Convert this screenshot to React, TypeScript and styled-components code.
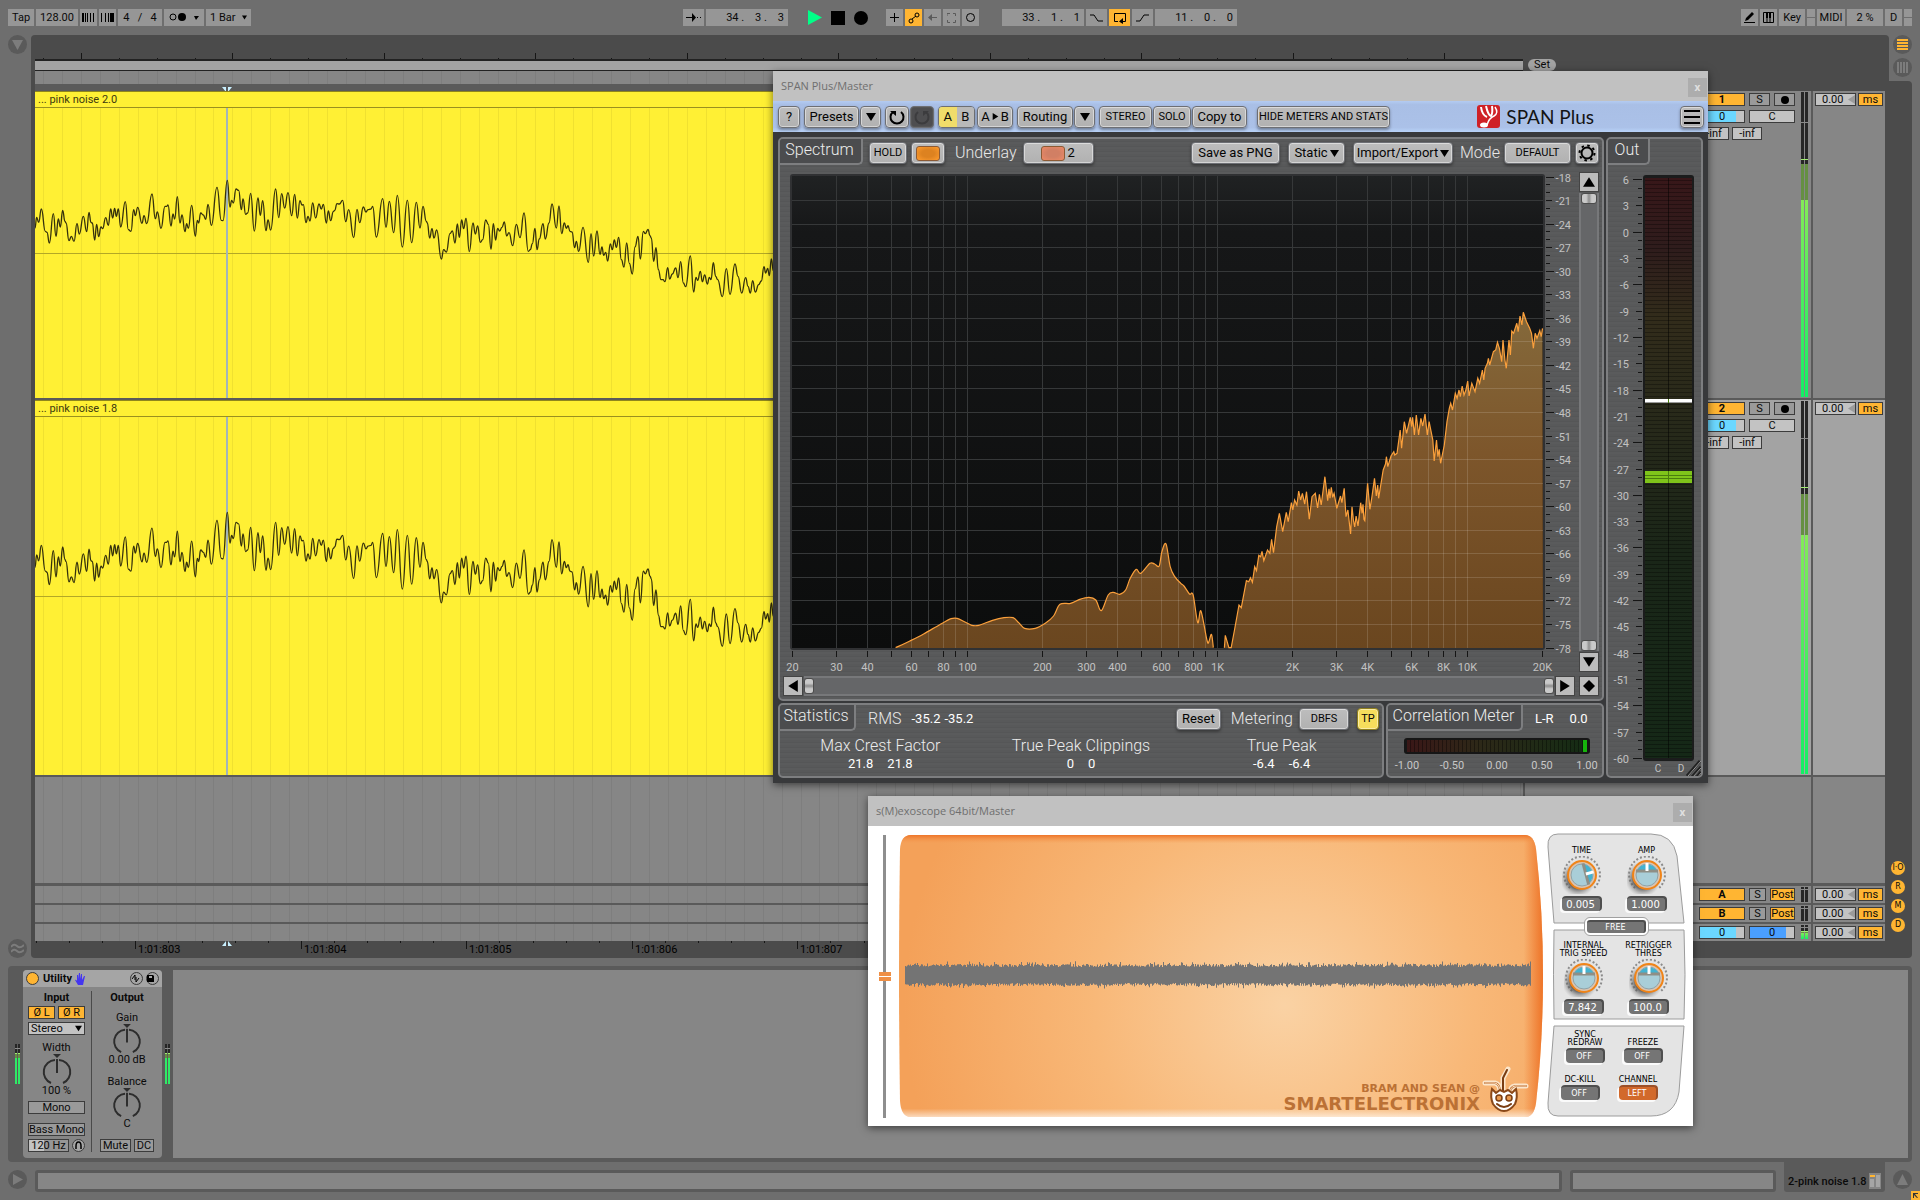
import React from "react";
import styled, { createGlobalStyle, css } from "styled-components";

/* ------------------------------------------------------------------ */
/* Palette and shared values                                           */
/* ------------------------------------------------------------------ */

const c = {
  bg: "#6e6e6e",
  dark: "#4b4b4b",
  edge: "#5a5a5a",
  panel: "#868686",
  light: "#a4a4a4",
  control: "#969696",
  field: "#c3c3c3",
  orange: "#ffb532",
  blue: "#6bd7ff",
  azure: "#4a9fff",
  yellow: "#fff034",
};

const uiFont = `Roboto, "Noto Sans", sans-serif`;
const spanFont = `Roboto, "Liberation Sans", sans-serif`;
const pixelFont = `"DejaVu Sans", sans-serif`;

const Global = createGlobalStyle`
  *, *::before, *::after { box-sizing: border-box; }
  html, body { margin: 0; background: ${c.bg}; }
  body { font: 11px/13px ${uiFont}; color: #0a0a0a; overflow: hidden; }
  button, input, select { font: inherit; color: inherit; margin: 0; padding: 0; border: 0; border-radius: 0; }
  button { cursor: pointer; }
  svg { display: block; }
`;

/* ------------------------------------------------------------------ */
/* Page frame                                                          */
/* ------------------------------------------------------------------ */

const Page = styled.main`
  position: relative;
  min-height: 100vh;
  display: flex;
  flex-direction: column;
  background: ${c.bg};
`;

const TopBar = styled.header`
  display: grid;
  grid-template-columns: 1fr auto 1fr;
  align-items: center;
  height: 35px;
  padding: 0 8px;
`;

const Group = styled.div<{ $end?: boolean }>`
  display: flex;
  align-items: center;
  gap: 2px;
  justify-content: ${(p) => (p.$end ? "flex-end" : "flex-start")};
`;

const Spacer = styled.span<{ $w: number }>`
  width: ${(p) => p.$w}px;
`;

const barControl = css<{ $w: number; $on?: boolean }>`
  width: ${(p) => p.$w}px;
  height: 17px;
  background: ${(p) => (p.$on ? c.orange : c.control)};
  text-align: center;
`;

const BarButton = styled.button<{ $w: number; $on?: boolean }>`
  ${barControl}
  display: flex;
  align-items: center;
  justify-content: center;
`;

const BarInput = styled.input<{ $w: number; $right?: boolean }>`
  ${barControl}
  text-align: ${(p) => (p.$right ? "right" : "center")};
  padding-right: ${(p) => (p.$right ? 4 : 0)}px;
  white-space: pre;
`;

const BarSelectBox = styled.label<{ $w: number }>`
  ${barControl}
  display: flex;
  align-items: center;
  justify-content: space-between;
  padding: 0 4px;
  select { appearance: none; background: none; }
`;

const Transport = styled.button`
  width: 21px;
  height: 17px;
  background: none;
  display: flex;
  align-items: center;
  justify-content: center;
`;

const Stub = styled.button`
  width: 8px;
  height: 17px;
  border-bottom: 8px solid ${c.control};
  border-top: 8px solid ${c.control};
  background: ${c.bg};
`;

const Workspace = styled.section`
  flex: 1;
  display: flex;
`;

const Rail = styled.div`
  width: 31px;
  padding-left: 8px;
  display: flex;
  flex-direction: column;
  justify-content: space-between;
`;

const Round = styled.button`
  width: 19px;
  height: 19px;
  border-radius: 50%;
  background: ${c.edge};
  display: flex;
  align-items: center;
  justify-content: center;
`;

const Arranger = styled.div`
  flex: 1;
  min-width: 0;
  display: flex;
  flex-direction: column;
  background: ${c.dark};
  border-radius: 4px 4px 0 4px;
  padding: 0 4px;
`;

const SideColumn = styled.div`
  width: 31px;
  display: flex;
  flex-direction: column;
`;

const SideTop = styled.div`
  display: flex;
  flex-direction: column;
  gap: 4px;
  height: 46px;
  padding-left: 4px;
`;

const SideFill = styled.div`
  flex: 1;
  margin-right: 8px;
  background: ${c.dark};
  border-radius: 0 4px 4px 0;
  display: flex;
  flex-direction: column;
  justify-content: flex-end;
  gap: 5px;
  padding: 0 0 26px 2px;
`;

const Toggle = styled.button`
  width: 14px;
  height: 14px;
  border-radius: 50%;
  background: ${c.orange};
  font: 8px/14px ${pixelFont};
  text-align: center;
`;

/* ------------------------------------------------------------------ */
/* Arrangement                                                         */
/* ------------------------------------------------------------------ */

const SIDE = 362;

const Ruler = styled.div`
  height: 24px;
  overflow: hidden;
`;

const OverviewRow = styled.div`
  display: flex;
  height: 12px;
  gap: 5px;
`;

const Overview = styled.div`
  flex: 1;
  background: #a3a3a3;
  border-top: 2px solid #222;
  border-bottom: 1px solid #222;
`;

const OverviewSide = styled.div`
  width: ${SIDE - 5}px;
`;

const SetButton = styled.button`
  display: block;
  width: 28px;
  height: 12px;
  border-radius: 6px;
  background: #a3a3a3;
  line-height: 12px;
`;

const Strip = styled.div`
  position: relative;
  height: 13px;
  margin-right: ${SIDE}px;
  background: ${c.panel};
`;

const Gap = styled.div`
  position: relative;
  height: 7px;
  margin-right: ${SIDE}px;
  background: ${c.edge};
`;

const Track = styled.div<{ $h?: number; $sep: number }>`
  ${(p) => (p.$h ? `height: ${p.$h}px;` : "flex: 1;")}
  display: grid;
  grid-template-columns: 1fr 286px 72px;
  column-gap: 2px;
  background: ${c.edge};
  box-sizing: content-box;
  border-bottom: ${(p) => p.$sep}px solid ${c.edge};
`;

const Lane = styled.div`
  position: relative;
  background: ${c.panel};
  overflow: hidden;
  min-width: 0;
`;

const Clip = styled.div`
  position: absolute;
  inset: 0;
  display: flex;
  flex-direction: column;
  background: ${c.yellow};
`;

const ClipTitle = styled.div`
  height: 17px;
  padding-left: 3px;
  border-top: 1px solid #8f861d;
  border-bottom: 1px solid #9a901f;
  line-height: 16px;
  color: #3c390f;
`;

const ClipBody = styled.div`
  position: relative;
  flex: 1;
  overflow: hidden;
`;

const Layer = styled.svg`
  position: absolute;
  inset: 0;
  width: 100%;
  height: 100%;
`;

const MixCell = styled.div<{ $selected?: boolean }>`
  background: ${(p) => (p.$selected ? "#a3a3a3" : c.panel)};
  display: flex;
  justify-content: flex-end;
  gap: 6px;
  padding: 0 3px 0 0;
`;

const MixStack = styled.div`
  display: flex;
  flex-direction: column;
  gap: 4px;
  padding-top: 2px;
  width: 96px;
`;

const MixRow = styled.div<{ $gap?: number }>`
  display: flex;
  gap: ${(p) => p.$gap ?? 4}px;
`;

type BoxTone = "orange" | "grey" | "light";
const tones: Record<BoxTone, string> = { orange: c.orange, grey: "#9a9a9a", light: c.field };

const Box = styled.button<{ $w: number; $tone?: BoxTone; $bold?: boolean }>`
  width: ${(p) => p.$w}px;
  height: 13px;
  border: 1px solid #3c3c3c;
  background: ${(p) => tones[p.$tone ?? "grey"]};
  display: flex;
  align-items: center;
  justify-content: center;
  line-height: 11px;
  font-weight: ${(p) => (p.$bold ? 700 : 400)};
  white-space: nowrap;
`;

const ValueBox = styled.input<{ $w: number; $fill?: string; $level?: number; $rest?: string }>`
  width: ${(p) => p.$w}px;
  height: 13px;
  border: 1px solid #3c3c3c;
  text-align: center;
  background: ${(p) =>
    p.$fill
      ? `linear-gradient(90deg, ${p.$fill} ${p.$level}%, ${p.$rest ?? c.field} ${p.$level}%)`
      : c.field};
`;

const DelayCell = styled(MixCell)`
  justify-content: flex-start;
  gap: 2px;
  padding: 2px 2px 0;
`;

const DelayField = styled.label`
  position: relative;
  width: 41px;
  height: 13px;
  svg { position: absolute; right: 1px; top: 1px; }
  input { text-align: left; padding-left: 6px; }
`;

const TimeRuler = styled.div`
  height: 17px;
  overflow: hidden;
`;

/* ------------------------------------------------------------------ */
/* Device view                                                         */
/* ------------------------------------------------------------------ */

const DeviceView = styled.section`
  display: flex;
  margin: 8px 8px 0;
  padding: 4px;
  height: 196px;
  background: ${c.edge};
  border-radius: 4px;
`;

const MeterSlot = styled.div`
  width: 11px;
  display: flex;
  align-items: center;
  justify-content: center;
`;

const Device = styled.div`
  width: 139px;
  background: ${c.panel};
  border-radius: 4px;
  overflow: hidden;
`;

const DeviceHead = styled.div`
  height: 17px;
  background: #a5a5a5;
  display: flex;
  align-items: center;
  gap: 3px;
  padding: 0 3px;
  font-weight: 700;
  span { margin-left: 1px; }
  svg:first-of-type { margin-right: auto; }
`;

const Dot = styled.button<{ $on?: boolean }>`
  width: 13px;
  height: 13px;
  border-radius: 50%;
  border: 1px solid #3c3c3c;
  background: ${(p) => (p.$on ? c.orange : "#a5a5a5")};
  display: flex;
  align-items: center;
  justify-content: center;
`;

const DeviceCols = styled.div`
  display: grid;
  grid-template-columns: 69px 70px;
  height: 171px;
`;

const DeviceCol = styled.div<{ $divide?: boolean }>`
  display: flex;
  flex-direction: column;
  align-items: center;
  height: 161px;
  margin-top: 4px;
  ${(p) => p.$divide && `border-right: 1px solid #4a4a4a; padding-right: 1px;`}
`;

const Caption = styled.div<{ $top?: number; $bold?: boolean }>`
  line-height: 13px;
  margin-top: ${(p) => p.$top ?? 0}px;
  font-weight: ${(p) => (p.$bold ? 700 : 400)};
`;

const DevRow = styled.div<{ $top: number }>`
  display: flex;
  gap: 3px;
  margin-top: ${(p) => p.$top}px;
`;

const StereoSelect = styled.label`
  display: flex;
  align-items: center;
  justify-content: space-between;
  width: 57px;
  height: 13px;
  margin-top: 3px;
  padding: 0 2px;
  border: 1px solid #3c3c3c;
  background: ${c.field};
  select { appearance: none; background: none; line-height: 11px; }
`;

const Chain = styled.div`
  flex: 1;
  background: ${c.panel};
`;

const StatusBar = styled.footer`
  display: flex;
  height: 38px;
  padding: 8px;
  align-items: flex-start;
`;

const StatusField = styled.output<{ $w?: number }>`
  ${(p) => (p.$w ? `width: ${p.$w}px;` : "flex: 1;")}
  height: 22px;
  margin-left: 8px;
  border: 3px solid ${c.edge};
  border-radius: 3px;
  background: ${c.panel};
`;

const StatusTab = styled.div`
  width: 101px;
  height: 30px;
  margin: -8px 8px 0;
  padding: 8px 4px 0;
  display: flex;
  align-items: center;
  justify-content: space-between;
  background: ${c.edge};
  border-radius: 0 0 3px 3px;
  font-weight: 500;
  white-space: nowrap;
`;

const Corner = styled.svg`
  position: absolute;
  right: 0;
  bottom: 0;
`;

/* ------------------------------------------------------------------ */
/* Floating windows                                                    */
/* ------------------------------------------------------------------ */

const Window = styled.section<{ $x: number; $y: number; $w: number }>`
  position: absolute;
  left: ${(p) => p.$x}px;
  top: ${(p) => p.$y}px;
  width: ${(p) => p.$w}px;
  box-shadow: 0 2px 8px rgba(0, 0, 0, 0.55);
`;

const TitleBar = styled.div`
  height: 30px;
  padding: 0 1px 0 8px;
  display: flex;
  align-items: center;
  justify-content: space-between;
  background: #c1c1c1;
  color: #6f6f6f;
  font: 11px/16px "Open Sans", "Noto Sans", sans-serif;
`;

const Close = styled.button`
  width: 19px;
  height: 19px;
  margin-top: 3px;
  background: #adadad;
  color: #e0e0e0;
  font: bold 10px/17px "Open Sans", sans-serif;
`;

const SpanBar = styled.div`
  height: 31px;
  padding: 0 4px 0 5px;
  display: flex;
  align-items: center;
  background: linear-gradient(#b3cbf2 0, #a9bfe6 12%, #abc1e8 85%, #b8d2f8 100%);
`;

const Cluster = styled.div<{ $mr?: number }>`
  display: flex;
  gap: 1px;
  margin-right: ${(p) => p.$mr ?? 4}px;
`;

const SpanButton = styled.button<{ $w: number; $caps?: boolean; $tone?: "on" | "off" }>`
  width: ${(p) => p.$w}px;
  height: 22px;
  display: flex;
  align-items: center;
  justify-content: center;
  gap: 2px;
  border-radius: 4px;
  border: 1px solid ${(p) => (p.$tone === "on" ? "#8f7f1e" : "#6d6f74")};
  background: ${(p) =>
    p.$tone === "on" ? "#f6dd5c" : p.$tone === "off" ? "#4e4e50" : "linear-gradient(#bdbdbd, #b1b1b1)"};
  box-shadow: inset 0 0 0 1px ${(p) => (p.$tone === "off" ? "#555" : "rgba(255,255,255,0.45)")},
    0 2px 3px rgba(0, 0, 0, 0.35);
  color: #050505;
  font: ${(p) => (p.$caps ? "11px" : "13px")}/18px ${spanFont};
  white-space: nowrap;
`;

const AB = styled.div`
  display: flex;
  width: 37px;
  height: 22px;
  border-radius: 4px;
  border: 1px solid #6d6f74;
  overflow: hidden;
  box-shadow: 0 2px 3px rgba(0, 0, 0, 0.35);
`;

const ABHalf = styled.button<{ $on?: boolean }>`
  flex: 1;
  background: ${(p) => (p.$on ? "#f0dc6a" : "#b9b9b9")};
  font: 13px/18px ${spanFont};
`;

const Brand = styled.div`
  display: flex;
  align-items: center;
  gap: 6px;
  margin-left: auto;
  margin-right: 86px;
  color: #141414;
  font: 19px/24px Lato, sans-serif;
`;

const SpanBody = styled.div`
  padding: 5px;
  display: grid;
  grid-template-columns: 1fr 97px;
  grid-template-rows: 564px 75px;
  gap: 2px;
  background: #38393b;
`;

const brushed = "repeating-linear-gradient(180deg, #58595a 0 2px, #555657 2px 3px, #5a5b5c 3px 5px)";

const Panel = styled.div<{ $tall?: boolean }>`
  border: 2px solid #7d7e80;
  border-radius: 5px;
  background: ${brushed};
  overflow: hidden;
  color: #ececec;
  ${(p) => p.$tall && "grid-column: 2; grid-row: 1 / span 2;"}
`;

const LowerPanels = styled.div`
  display: grid;
  grid-template-columns: 606px 1fr;
  gap: 2px;
`;

const Tab = styled.h2<{ $w: number }>`
  width: ${(p) => p.$w}px;
  height: 28px;
  margin: -2px 0 0 -2px;
  flex: none;
  border-right: 2px solid #7d7e80;
  border-bottom: 2px solid #7d7e80;
  border-bottom-right-radius: 5px;
  background: #4b4c4e;
  text-align: center;
  font: 300 16px/26px ${spanFont};
`;

const PanelHead = styled.div`
  display: flex;
  align-items: flex-start;
`;

const HeadItems = styled.div`
  flex: 1;
  display: flex;
  align-items: center;
  gap: 4px;
  padding: 3px 3px 0 6px;
`;

const HeadText = styled.span<{ $ml?: number; $mr?: number }>`
  margin-left: ${(p) => p.$ml ?? 0}px;
  margin-right: ${(p) => p.$mr ?? 0}px;
  font: 300 16px/22px ${spanFont};
  color: #e8e8e8;
`;

const Push = styled.span`
  flex: 1;
`;

const Swatch = styled.span<{ $color: string; $core: string }>`
  width: 24px;
  height: 15px;
  border-radius: 3px;
  border: 1px solid #8c5a34;
  background: radial-gradient(${(p) => p.$core} 40%, ${(p) => p.$color} 100%);
`;

const PlotGrid = styled.div`
  display: grid;
  grid-template-columns: 1fr 20px;
  grid-template-rows: 500px 20px;
  gap: 4px;
  padding: 7px 3px 0;
`;

const Plot = styled.svg`
  overflow: visible;
`;

const Scroll = styled.div<{ $vertical?: boolean }>`
  display: flex;
  flex-direction: ${(p) => (p.$vertical ? "column" : "row")};
  gap: 1px;
`;

const ScrollTrack = styled.div<{ $vertical?: boolean }>`
  flex: 1;
  display: flex;
  flex-direction: ${(p) => (p.$vertical ? "column" : "row")};
  justify-content: space-between;
  align-items: stretch;
  border: solid #77787a;
  border-width: ${(p) => (p.$vertical ? "0 2px" : "2px 0")};
  background: #656668;
`;

const Thumb = styled.button<{ $vertical?: boolean }>`
  border: 1px solid #4c4c4c;
  border-radius: 3px;
  ${(p) =>
    p.$vertical
      ? "height: 11px; background: linear-gradient(90deg,#c9c9c9 30%,#8e8e8e 50%,#c9c9c9 70%);"
      : "width: 10px; background: linear-gradient(180deg,#c9c9c9 30%,#8e8e8e 50%,#c9c9c9 70%);"}
`;

const Square = styled.button`
  width: 20px;
  height: 20px;
  flex: none;
  border: 1px solid #e0e0e0;
  outline: 1px solid #444;
  outline-offset: -1px;
  background: #bcbcbc;
  display: flex;
  align-items: center;
  justify-content: center;
`;

const Num = styled.span`
  font: 13px/22px ${spanFont};
  color: #fff;
`;

const StatGrid = styled.div`
  display: grid;
  grid-template-columns: 1fr 1fr 1fr;
  padding: 5px 0 0;
`;

const Stat = styled.div`
  text-align: center;
  font: 300 16px/20px ${spanFont};
  div { display: flex; justify-content: center; gap: 14px; height: 16px; line-height: 16px; }
  div > span { line-height: 16px; }
`;

/* ------------------------------------------------------------------ */
/* Oscilloscope window                                                 */
/* ------------------------------------------------------------------ */

const ScopeBody = styled.div`
  display: flex;
  height: 300px;
  background: #fff;
  padding: 7px 7px 0 11px;
`;

const Fader = styled.input`
  appearance: none;
  writing-mode: vertical-lr;
  width: 12px;
  height: 283px;
  margin-top: 2px;
  background: linear-gradient(90deg, transparent 4px, #8e8e8e 4px 7px, transparent 7px);
  &::-webkit-slider-thumb {
    appearance: none;
    width: 12px;
    height: 9px;
    background: linear-gradient(#ef8f45 0 4px, #fff 4px 5px, #ef8f45 5px);
  }
`;

const Screen = styled.svg`
  margin: 2px 3px 0 8px;
  flex: none;
`;

const Controls = styled.div`
  position: relative;
  width: 140px;
  display: flex;
  flex-direction: column;
`;

const Shapes = styled.svg`
  position: absolute;
  left: 0;
  top: 0;
`;

const Section = styled.div<{ $h: number; $top: number; $left: number }>`
  position: relative;
  height: ${(p) => p.$h}px;
  padding: ${(p) => p.$top}px 0 0 ${(p) => p.$left}px;
  display: flex;
  align-items: flex-start;
`;

const Unit = styled.div<{ $w: number }>`
  width: ${(p) => p.$w}px;
  display: flex;
  flex-direction: column;
  align-items: center;
`;

const TinyLabel = styled.label<{ $h: number }>`
  height: ${(p) => p.$h}px;
  display: flex;
  align-items: flex-end;
  justify-content: center;
  text-align: center;
  white-space: pre;
  font: 8px/8px ${pixelFont};
  color: #000;
  margin-bottom: 1px;
`;

const Readout = styled.input`
  width: 40px;
  height: 15px;
  margin-top: 2px;
  border-radius: 4px;
  border-top: 2px solid #4e4e4e;
  border-right: 2px solid #4e4e4e;
  box-shadow: -2px 2px 0 #fafafa;
  background: #757575;
  color: #fff;
  text-align: center;
  font: 10px/13px ${pixelFont};
`;

const Tiny = styled.button<{ $w?: number; $hot?: boolean }>`
  width: ${(p) => p.$w ?? 39}px;
  height: 15px;
  border-radius: 4px;
  border-top: 2px solid ${(p) => (p.$hot ? "#9c5028" : "#4e4e4e")};
  border-right: 2px solid ${(p) => (p.$hot ? "#9c5028" : "#4e4e4e")};
  box-shadow: -2px 2px 0 #fafafa;
  background: ${(p) => (p.$hot ? "#d2692b" : "#757575")};
  color: #fff;
  font: 8px/12px ${pixelFont};
`;

const FreeRow = styled.div`
  position: relative;
  display: flex;
  justify-content: center;
  height: 7px;
  align-items: center;
`;

const FreeFrame = styled.div`
  padding: 2px;
  border: 1px solid #a0a0a0;
  border-radius: 6px;
  background: #fff;
  button { display: block; height: 13px; border-radius: 3px; line-height: 10px; box-shadow: none; }
`;

/* ------------------------------------------------------------------ */
/* Data                                                                */
/* ------------------------------------------------------------------ */

type Pt = [number, number];
const pairs = (flat: number[]): Pt[] => {
  const out: Pt[] = [];
  for (let i = 0; i < flat.length; i += 2) out.push([flat[i], flat[i + 1]]);
  return out;
};

/* Sample peaks of the noise clip: x from the lane's left edge, y from the
   zero line, both in thirds of a pixel. */
const noiseA = pairs([
  105,235,110,203,116,218,124,178,136,245,141,248,148,280,160,192,168,260,175,208,181,232,188,182,195,215,198,220,207,273,
  214,260,222,275,231,222,238,253,250,200,260,246,267,188,273,218,277,220,284,271,290,224,296,261,303,232,308,237,317,204,
  325,227,332,178,338,205,344,176,349,200,355,178,362,232,376,156,385,240,393,245,401,180,406,198,413,173,426,221,432,198,
  440,222,456,133,466,207,472,187,483,236,495,170,500,170,504,166,513,229,519,193,524,208,532,141,540,220,546,196,555,246,
  560,222,565,236,575,167,586,260,592,212,596,220,602,190,610,196,617,209,624,164,634,227,651,113,664,212,669,213,682,92,
  690,172,695,152,700,160,708,118,716,122,724,180,729,148,737,194,743,190,752,131,763,244,774,145,781,197,788,153,798,243,
  804,211,812,241,827,118,836,204,845,132,854,175,864,129,875,198,884,134,892,205,900,153,906,166,910,165,918,219,924,200,
  930,214,938,160,947,205,957,163,964,178,970,164,979,220,985,184,992,213,1000,186,1004,182,1011,162,1018,163,1028,152,
  1037,216,1046,180,1061,264,1071,179,1079,219,1090,172,1098,187,1104,180,1113,178,1118,170,1129,262,1148,147,1158,233,
  1168,155,1181,249,1192,137,
]).map(([x, y]): Pt => [x - 105, y - 310]);

const noiseB = pairs([
  7,262,22,122,35,249,49,128,60,205,69,140,79,185,82,190,89,235,96,207,102,235,110,211,124,298,131,270,139,277,150,222,
  157,214,165,250,172,193,178,233,185,181,191,207,198,176,208,276,219,190,226,223,233,199,241,248,248,240,257,181,265,194,
  273,269,280,192,287,241,293,206,299,214,306,203,313,187,320,229,327,219,338,258,349,194,360,234,372,160,385,275,391,270,
  397,252,405,206,411,270,418,238,429,192,436,238,447,190,456,133,469,205,477,139,485,222,493,190,499,206,504,198,510,215,
  516,217,524,264,529,245,536,275,549,203,565,308,573,222,581,289,591,214,600,284,606,262,611,287,617,278,623,304,631,253,
  637,270,643,241,649,263,656,233,664,300,672,322,680,250,688,311,697,343,705,262,714,230,721,298,730,215,736,222,744,209,
  750,228,754,235,761,305,768,264,775,330,783,360,789,360,795,366,803,324,809,358,817,343,827,325,834,354,842,306,850,370,
  857,381,871,289,881,397,888,353,893,362,901,335,907,366,914,346,922,373,928,353,933,360,940,309,947,350,953,360,967,411,
  979,327,990,404,1005,313,1014,350,1025,400,1037,354,1044,380,1051,400,1058,363,1066,397,1076,375,1084,364,1092,321,
  1097,340,1103,326,1108,348,1114,298,1120,333,1130,300,1142,350,1154,290,
]).map(([x, y]): Pt => [x + 1095, y - 280]);

const noise: Pt[] = [...noiseA, ...noiseB];

const wavePath = (mid: number, gain: number) => {
  const pts = noise.map(([x, y]): Pt => [x / 3, mid + (y * gain) / 3]);
  let d = `M${pts[0][0]} ${pts[0][1]}`;
  for (let i = 1; i < pts.length; i++) {
    const [x0, y0] = pts[i - 1];
    const [x1, y1] = pts[i];
    const h = (x0 + x1) / 2;
    d += `C${h} ${y0} ${h} ${y1} ${x1} ${y1}`;
  }
  return d;
};

const spectrumLow = pairs([
  34,1103,65,1083,95,1062,130,1034,155,1016,168,1015,185,1026,200,1036,215,1036,245,1021,270,1013,290,1013,302,1028,315,1045,
  338,1045,360,1030,378,1008,392,973,415,970,435,958,455,952,470,960,482,992,497,945,508,937,522,943,535,930,545,895,
  558,868,568,880,588,850,598,852,608,858,614,815,623,792,632,860,642,890,655,910,662,918,674,942,682,945,692,1028,
  699,993,712,1080,716,1086,722,1063,726,1103,
]);
const spectrumHigh = pairs([
  750,1103,752,1066,760,1103,765,1103,772,1050,782,975,787,983,798,902,803,905,807,893,811,907,816,860,820,872,825,826,
  829,830,832,814,836,842,844,810,849,820,853,778,857,818,864,740,870,700,877,755,885,697,889,725,896,668,899,690,903,660,
  908,675,912,633,916,660,920,640,925,672,929,635,935,718,941,650,948,640,953,684,957,643,961,675,969,590,975,662,978,626,
  980,655,983,622,986,652,989,640,995,685,1003,648,1006,668,1011,625,1015,710,1019,690,1025,762,1028,680,1031,720,1034,741,
  1037,708,1041,738,1047,668,1050,700,1052,673,1054,718,1056,722,1062,610,1067,688,1071,655,1077,595,1081,648,1084,615,
  1086,655,1096,570,1101,552,1103,530,1106,560,1113,528,1119,515,1121,525,1126,520,1133,450,1136,505,1142,425,1147,460,
  1155,412,1158,440,1160,412,1164,465,1168,405,1173,465,1178,415,1182,438,1187,402,1192,465,1196,425,1204,480,1207,543,
  1212,480,1215,530,1218,508,1221,550,1229,495,1235,425,1240,385,1243,370,1247,390,1253,340,1257,355,1261,330,1264,350,
  1268,318,1272,345,1276,330,1280,303,1283,348,1289,310,1296,335,1302,295,1306,310,1312,270,1315,300,1318,265,1323,250,
  1325,235,1328,255,1336,215,1341,210,1345,187,1349,205,1354,245,1357,180,1361,240,1364,265,1370,180,1373,225,1376,153,
  1380,160,1387,130,1390,155,1394,108,1398,135,1401,97,1408,125,1415,145,1419,160,1423,205,1427,160,1431,175,1437,152,
  1440,170,1443,145,
]);

const scaled = (pts: Pt[]) => pts.map(([x, y]): Pt => [x / 2.178 + 97, y / 3 + 108]);
const toPlot = (pts: Pt[]) => scaled(pts).map(([x, y]) => `${x.toFixed(1)},${y.toFixed(1)}`).join(" L");

/* Catmull-Rom spline, used where the analyser interpolates between bins. */
const toSpline = (raw: Pt[]) => {
  const p = scaled(raw);
  let d = `${p[0][0]},${p[0][1]}`;
  for (let i = 0; i < p.length - 1; i++) {
    const a = p[Math.max(0, i - 1)];
    const b = p[i];
    const e = p[i + 1];
    const f = p[Math.min(p.length - 1, i + 2)];
    d += ` C${b[0] + (e[0] - a[0]) / 6},${b[1] + (e[1] - a[1]) / 6} ${e[0] - (f[0] - b[0]) / 6},${e[1] - (f[1] - b[1]) / 6} ${e[0]},${e[1]}`;
  }
  return d;
};

const freqX = (f: number) => Math.round(9 + 250 * Math.log10(f / 20)) + 0.5;
const dbY = (db: number) => Math.round(4.5 + ((-18 - db) * 471) / 60) + 0.5;

const ticks = [30,40,50,60,70,80,90,100,200,300,400,500,600,700,800,900,1000,2000,3000,4000,5000,6000,7000,8000,9000,10000];
const freqLabels: [number, string][] = [
  [20,"20"],[30,"30"],[40,"40"],[60,"60"],[80,"80"],[100,"100"],[200,"200"],[300,"300"],[400,"400"],[600,"600"],[800,"800"],
  [1000,"1K"],[2000,"2K"],[3000,"3K"],[4000,"4K"],[6000,"6K"],[8000,"8K"],[10000,"10K"],[20000,"20K"],
];
const range = (n: number) => Array.from({ length: n }, (_, i) => i);

/* ------------------------------------------------------------------ */
/* Drawings                                                            */
/* ------------------------------------------------------------------ */

const GridLines = () => (
  <Layer aria-hidden>
    {range(80).map((i) => (
      <rect key={i} x={Math.round(8 + (i * 303) / 16)} y="0" width="1" height="100%" fill="#000" opacity="0.06" />
    ))}
  </Layer>
);

const Playhead = styled.span`
  position: absolute;
  left: 191px;
  top: 0;
  bottom: 0;
  width: 2px;
  background: #a3b5b9;
`;

const MarkerBox = styled.svg`
  position: absolute;
  left: 187px;
  top: 3px;
`;

const Marker = () => (
  <MarkerBox width="10" height="5" aria-hidden>
    <path d="M0 0h4v5zM10 0H6v5z" fill="#c9f0ff" />
  </MarkerBox>
);

const Meter = ({ h, tick, peak, dull, live }: { h: number; tick: number; peak: number; dull: number; live: number }) => (
  <svg width="7" height={h} aria-hidden>
    <defs>
      <linearGradient id={`m${h}`} x1="0" y1="0" x2="0" y2="1">
        <stop offset="0" stopColor="#84ea58" />
        <stop offset="1" stopColor="#12f064" />
      </linearGradient>
    </defs>
    {[0, 4].map((x) => (
      <g key={x}>
        <rect x={x} y="1" width="3" height={h - 2} fill="#262626" />
        <rect x={x} y={dull} width="3" height={live - dull} fill="#658f43" />
        <rect x={x} y={live} width="3" height={Math.max(0, h - 1 - live)} fill={`url(#m${h})`} />
      </g>
    ))}
    {tick > 0 && <rect y={tick} width="7" height="1" fill="#8a8a8a" />}
    {peak > 0 && <rect y={peak} width="7" height="1" fill="#a2ee72" />}
  </svg>
);

const Tri = ({ dir, size = 10 }: { dir: "up" | "down" | "left" | "right" | "diamond"; size?: number }) => {
  const d = {
    up: "M0 9L5 1l5 8z",
    down: "M0 1h10L5 9z",
    left: "M9 0v10L1 5z",
    right: "M1 0v10l8-5z",
    diamond: "M5 0l5 5-5 5-5-5z",
  }[dir];
  return (
    <svg width={size} height={size} viewBox="0 0 10 10" aria-hidden>
      <path d={d} fill="#000" />
    </svg>
  );
};

const Knob = () => (
  <svg width="30" height="34" viewBox="0 0 30 34" aria-hidden>
    <path d="M11 0h8l-4 4z" fill="#2d2d2d" />
    <path d="M9 29A12 12 0 0 1 13 6M17 6a12 12 0 0 1 4 23" fill="none" stroke="#2d2d2d" strokeWidth="2" />
    <path d="M15 5v14" stroke="#2d2d2d" strokeWidth="2" />
  </svg>
);

const ScopeKnob = ({ angle }: { angle: number }) => (
  <svg width="40" height="38" viewBox="-20 -19 40 38" aria-hidden>
    <defs>
      <radialGradient id="knobShade">
        <stop offset="0.5" stopColor="#333" stopOpacity="0.8" />
        <stop offset="1" stopColor="#999" stopOpacity="0" />
      </radialGradient>
    </defs>
    <path d="M-12 13A18 18 0 1 1 12 13" fill="none" stroke="#8b8b8b" strokeWidth="2" strokeDasharray="2 2" />
    <circle cx="-4" cy="4" r="18" fill="url(#knobShade)" />
    <circle r="14" fill="#d9c3b0" stroke="#f08418" strokeWidth="2" />
    <circle r="11" fill="#a9ced8" stroke="#8fa3a8" strokeWidth="1" />
    <g transform={`rotate(${angle})`}>
      <path d="M-10 -4A11 11 0 0 1 10 -4z" fill="#43b2d0" />
      <path d="M-11 -4h22" stroke="#8f8f86" strokeWidth="3" />
      <path d="M0 -12v8" stroke="#fff" strokeWidth="3" />
    </g>
  </svg>
);

const PlotGridLines = () => (
  <>
    {ticks.map((f) => (
      <path key={f} d={`M${freqX(f)} 4V476`} />
    ))}
    {range(19).map((i) => (
      <path key={`h${i}`} d={`M9 ${dbY(-21 - i * 3)}H760`} />
    ))}
  </>
);

const Spectrum = () => {
  const low = toSpline(spectrumLow);
  const high = toPlot(spectrumHigh);
  const area = `M${low} L430,476 L113,476z M441,476 L${high} L760,476z`;
  return (
    <Plot width="100%" height="500" role="img" aria-label="Spectrum">
      <defs>
        <linearGradient id="specFill" x1="0" y1="150" x2="0" y2="476" gradientUnits="userSpaceOnUse">
          <stop offset="0" stopColor="#84683a" />
          <stop offset="0.4" stopColor="#7d562b" />
          <stop offset="1" stopColor="#6a461f" />
        </linearGradient>
        <linearGradient id="specBg" x1="0" y1="0" x2="0" y2="1">
          <stop offset="0" stopColor="#202223" />
          <stop offset="0.12" stopColor="#161718" />
          <stop offset="1" stopColor="#0c0d0d" />
        </linearGradient>
        <clipPath id="areaClip">
          <path d={area} />
        </clipPath>
      </defs>
      <rect x="7" y="2" width="755" height="476" rx="3" fill="#303133" />
      <rect x="9" y="4" width="751" height="472" fill="url(#specBg)" />
      <g stroke="#363839" strokeWidth="1"><PlotGridLines /></g>
      <path d={area} fill="url(#specFill)" />
      <g stroke="#fff" strokeOpacity="0.14" strokeWidth="1" clipPath="url(#areaClip)"><PlotGridLines /></g>
      <path d={`M${low} M${high}`} fill="none" stroke="#fba03c" strokeWidth="1.2" />
      <g stroke="#151515" strokeWidth="1">
        {[20, ...ticks, 20000].map((f) => (
          <path key={f} d={`M${freqX(f)} 479v6`} />
        ))}
        {range(61).map((i) => (
          <path key={i} d={`M763 ${dbY(-18 - i)}h${i % 3 ? 4 : i % 6 ? 6 : 8}`} />
        ))}
      </g>
      <g fill="#c2c2c2" fontFamily={spanFont} fontSize="11">
        {freqLabels.map(([f, t]) => (
          <text key={t} x={freqX(f)} y="499" textAnchor="middle">
            {t}
          </text>
        ))}
        {range(21).map((i) => (
          <text key={i} x="788" y={dbY(-18 - i * 3) + 4} textAnchor="end">
            {-18 - i * 3}
          </text>
        ))}
      </g>
    </Plot>
  );
};

const outY = (db: number) => Math.round(12 + ((6 - db) * 579) / 66) + 0.5;

const OutSvg = styled.svg`
  margin-top: 2px;
`;

const OutMeter = () => (
  <OutSvg width="93" height="609" role="img" aria-label="Output level">
    <defs>
      <linearGradient id="outFill" x1="0" y1="0" x2="0" y2="1">
        <stop offset="0" stopColor="#381719" />
        <stop offset="0.12" stopColor="#2f1c1c" />
        <stop offset="0.24" stopColor="#322c1b" />
        <stop offset="0.45" stopColor="#26291a" />
        <stop offset="0.65" stopColor="#1a2618" />
        <stop offset="1" stopColor="#152817" />
      </linearGradient>
    </defs>
    <rect x="35" y="8" width="51" height="586" rx="3" fill="#1b1c1c" />
    <rect x="37" y="11" width="47" height="580" fill="url(#outFill)" />
    <g stroke="#000" strokeOpacity="0.3" strokeWidth="1">
      {range(145).map((i) => (
        <path key={i} d={`M37 ${13.5 + i * 4}h47`} />
      ))}
      <path d="M60.500 11v580" strokeOpacity="0.5" />
    </g>
    <rect x="37" y="232" width="47" height="3" fill="#fff" />
    <rect x="37" y="235" width="47" height="1" fill="#9a9a9a" />
    <rect x="37" y="304" width="47" height="12" fill="#7fc41a" />
    <path d="M37 308.500h47M37 311.500h47M60.500 304v12M60.500 232v4" stroke="#4a7d0e" strokeWidth="1" />
    <g stroke="#151515" strokeWidth="1">
      {range(67).map((i) => (
        <path key={i} d={`M34 ${outY(6 - i)}h${i % 3 ? -4 : i % 6 ? -6 : -9}`} />
      ))}
    </g>
    <g fill="#c2c2c2" fontFamily={spanFont} fontSize="11">
      {range(23).map((i) => (
        <text key={i} x="21" y={outY(6 - i * 3) + 4} textAnchor="end">
          {6 - i * 3}
        </text>
      ))}
      <text x="50" y="605" textAnchor="middle" fontSize="10">C</text>
      <text x="73" y="605" textAnchor="middle" fontSize="10">D</text>
    </g>
    <path d="M79 609l13-15M84 610l9-10M89 610l4-5" stroke="#222" strokeWidth="3" />
    <path d="M80 609l13-15M85 610l8-9M90 610l3-4" stroke="#999" strokeWidth="1" />
  </OutSvg>
);

const Correlation = () => (
  <svg width="214" height="45" role="img" aria-label="Correlation">
    <defs>
      <linearGradient id="corr">
        <stop offset="0" stopColor="#3a1717" />
        <stop offset="0.4" stopColor="#2d2818" />
        <stop offset="1" stopColor="#142c14" />
      </linearGradient>
    </defs>
    <rect x="16" y="7" width="186" height="16" rx="3" fill="#161616" />
    <rect x="19" y="9" width="180" height="12" fill="url(#corr)" />
    {range(44).map((i) => (
      <rect key={i} x={22 + i * 4} y="9" width="1" height="12" fill="#000" opacity="0.35" />
    ))}
    <rect x="195" y="9" width="4" height="12" fill="#16b50c" />
    <g fill="#c8c8c8" fontFamily={spanFont} fontSize="11" textAnchor="middle">
      {["-1.00", "-0.50", "0.00", "0.50", "1.00"].map((t, i) => (
        <text key={t} x={19 + i * 45} y="38">
          {t}
        </text>
      ))}
    </g>
  </svg>
);

const scopeShape = (() => {
  let seed = 7;
  const rnd = () => {
    seed = (seed * 16807) % 2147483647;
    return seed / 2147483647;
  };
  const spike = () => 3 * rnd() + (rnd() > 0.8 ? 3 * rnd() : 0);
  const top = range(626).map((i) => `${6 + i} ${(132 - spike()).toFixed(1)}H${7 + i}`);
  const bottom = range(626).map((i) => `${632 - i} ${(148 + spike()).toFixed(1)}H${631 - i}`);
  return `M${top.join("L")}L${bottom.join("L")}z`;
})();

const Mascot = () => (
  <g transform="translate(583 231)" fill="none" strokeLinecap="round">
    <path d="M3 17h10q5 1 5 9M44 20H33q-5 1-5 7M21 26V12l5-9" stroke="#fbe6cc" strokeWidth="5" />
    <path d="M3 17h10q5 1 5 9M44 20H33q-5 1-5 7" stroke="#c06d2c" strokeWidth="2" />
    <path d="M3 17h10q5 1 5 9M44 20H33q-5 1-5 7" stroke="#fbe6cc" strokeWidth="1" />
    <path d="M21 26V12l4-8" stroke="#7a3d12" strokeWidth="2" />
    <path d="M10 23l4 4 4-3 4 2 4-2 4 3 4-4q2 8-1 15-5 7-11 7t-11-7q-3-7-1-15z" fill="#fff" stroke="#8a4818" strokeWidth="2" />
    <circle cx="17" cy="32" r="3" stroke="#7a3d12" strokeWidth="1.500" fill="#e99a50" />
    <circle cx="27" cy="32" r="3" stroke="#7a3d12" strokeWidth="1.500" fill="#e99a50" />
    <path d="M15 38q7 6 14 0" stroke="#7a3d12" strokeWidth="2" />
  </g>
);

/* ------------------------------------------------------------------ */
/* Sections                                                            */
/* ------------------------------------------------------------------ */

const Bars = ({ flip }: { flip?: boolean }) => (
  <svg width="13" height="9" aria-hidden>
    {(flip ? [[0, 1], [4, 1], [7, 1], [9, 2], [11, 2]] : [[0, 2], [3, 1], [5, 1], [8, 1], [11, 1]]).map(([x, w]) => (
      <rect key={x} x={x} width={w} height="9" />
    ))}
  </svg>
);

const glyph = { fill: "none", stroke: "#000", strokeWidth: 1.5 };

const TopControls = () => (
  <TopBar>
    <Group>
      <BarButton $w={26}>Tap</BarButton>
      <BarInput $w={42} aria-label="Tempo" defaultValue="128.00" />
      <BarButton $w={17} aria-label="Nudge down"><Bars /></BarButton>
      <BarButton $w={17} aria-label="Nudge up"><Bars flip /></BarButton>
      <BarInput $w={44} aria-label="Time signature" defaultValue="4   /   4" />
      <BarButton $w={40} aria-label="Metronome">
        <svg width="30" height="9" aria-hidden>
          <circle cx="4" cy="4" r="3" {...glyph} strokeWidth="1" />
          <circle cx="13" cy="4" r="4" />
          <path d="M25 3h5l-3 4z" />
        </svg>
      </BarButton>
      <BarSelectBox $w={45}>
        <select aria-label="Quantization"><option>1 Bar</option></select>
        <Tri dir="down" size={5} />
      </BarSelectBox>
    </Group>
    <Group>
      <BarButton $w={21} aria-label="Follow">
        <svg width="15" height="9" aria-hidden><path d="M0 4h6v-4l4 4.500-4 4.500V5H0zM11 4h1v1h-1zM14 4h1v1h-1z" /></svg>
      </BarButton>
      <BarInput $w={82} $right aria-label="Position" defaultValue="34 .    3 .    3" />
      <Spacer $w={12} />
      <Transport aria-label="Play"><svg width="14" height="15"><path d="M0 0v15l14-7.500z" fill="#0f8" /></svg></Transport>
      <Transport aria-label="Stop"><svg width="14" height="14"><path d="M0 0h14v14H0z" /></svg></Transport>
      <Transport aria-label="Record"><svg width="14" height="14"><circle cx="7" cy="7" r="7" /></svg></Transport>
      <Spacer $w={11} />
      <BarButton $w={17} aria-label="Overdub"><svg width="9" height="9"><path d="M4.500 0v9M0 4.500h9" {...glyph} strokeWidth="1" /></svg></BarButton>
      <BarButton $w={17} $on aria-label="Automation arm">
        <svg width="12" height="12"><circle cx="3" cy="9" r="2" {...glyph} strokeWidth="1" /><circle cx="9" cy="3" r="2" {...glyph} strokeWidth="1" /><path d="M4 7l4-3" {...glyph} strokeWidth="1" /></svg>
      </BarButton>
      <BarButton $w={17} aria-label="Re-enable automation"><svg width="9" height="9"><path d="M9 4v1H4v3L0 4.500 4 1v3z" fill="#5a5a5a" /></svg></BarButton>
      <BarButton $w={17} aria-label="Capture"><svg width="9" height="10"><path d="M0 3V.5h3M6 .5h2.500V3M8.500 7v2.500H6M3 9.500H.5V7" fill="none" stroke="#5a5a5a" /></svg></BarButton>
      <BarButton $w={17} aria-label="Session record"><svg width="9" height="9"><circle cx="4.500" cy="4.500" r="4" {...glyph} strokeWidth="1" /></svg></BarButton>
      <Spacer $w={19} />
      <BarInput $w={82} $right aria-label="Loop start" defaultValue="33 .    1 .    1" />
      <BarButton $w={21} aria-label="Punch in"><svg width="13" height="8"><path d="M0 1h4l4 6h5" {...glyph} strokeWidth="1" /></svg></BarButton>
      <BarButton $w={21} $on aria-label="Loop">
        <svg width="14" height="12"><path d="M7 9.500H12.500V1.500h-11v8H5" {...glyph} strokeWidth="1" /><path d="M10 6v6L6 9.500z" /></svg>
      </BarButton>
      <BarButton $w={21} aria-label="Punch out"><svg width="13" height="8"><path d="M0 7h4l4-6h5" {...glyph} strokeWidth="1" /></svg></BarButton>
      <BarInput $w={82} $right aria-label="Loop length" defaultValue="11 .    0 .    0" />
    </Group>
    <Group $end>
      <BarButton $w={17} aria-label="Draw"><svg width="11" height="11"><path d="M1 9l1-3 6-6 2 2-6 6zM0 10h11v1H0z" /></svg></BarButton>
      <BarButton $w={17} aria-label="Computer keyboard">
        <svg width="11" height="11"><path d="M.5.5h10v10H.5zM4 5v6M7 5v6" {...glyph} strokeWidth="1" /><path d="M3 0h2v6H3zM6 0h2v6H6z" /></svg>
      </BarButton>
      <BarButton $w={26}>Key</BarButton>
      <Stub aria-label="Key in" />
      <BarButton $w={28}>MIDI</BarButton>
      <BarButton $w={36}>2 %</BarButton>
      <BarButton $w={17}>D</BarButton>
      <Stub aria-label="MIDI out" />
    </Group>
  </TopBar>
);

const Delay = ({ selected }: { selected?: boolean }) => (
  <DelayCell $selected={selected}>
    <DelayField>
      <ValueBox $w={41} aria-label="Track delay" defaultValue="0.00" />
      <svg width="7" height="11" aria-hidden><path d="M7 1v9L0 5.500z" fill="#9b9b9b" /></svg>
    </DelayField>
    <Box $w={25} $tone="orange">ms</Box>
  </DelayCell>
);

const AudioTrack = ({ n, name, h, gain, selected, meter }: {
  n: number; name: string; h: number; gain: number; selected?: boolean;
  meter: { tick: number; peak: number; dull: number; live: number };
}) => {
  const mid = Math.floor((h - 17) / 2);
  return (
    <Track $h={h} $sep={2}>
      <Lane>
        <Clip>
          <ClipTitle>... {name}</ClipTitle>
          <ClipBody>
            <GridLines />
            <Layer aria-hidden>
              <rect y={mid} width="100%" height="1" fill="#b3a826" />
            </Layer>
            <Playhead />
            <Layer aria-hidden>
              <path d={wavePath(mid, gain)} fill="none" stroke="#35310c" strokeWidth="1.300" />
            </Layer>
          </ClipBody>
        </Clip>
      </Lane>
      <MixCell $selected={selected}>
        <MixStack>
          <MixRow>
            <Box $w={46} $tone="orange" $bold>{n}</Box>
            <Box $w={21}>S</Box>
            <Box $w={21} aria-label="Arm"><svg width="8" height="8"><circle cx="4" cy="4" r="4" /></svg></Box>
          </MixRow>
          <MixRow>
            <ValueBox $w={46} $fill={c.blue} $level={82} aria-label="Volume" defaultValue="0" />
            <ValueBox $w={46} aria-label="Pan" defaultValue="C" />
          </MixRow>
          <MixRow $gap={3}>
            <ValueBox $w={30} aria-label="Send A" defaultValue="-inf" />
            <ValueBox $w={30} aria-label="Send B" defaultValue="-inf" />
          </MixRow>
        </MixStack>
        <Meter h={h} {...meter} />
      </MixCell>
      <Delay selected={selected} />
    </Track>
  );
};

const Arrangement = () => (
  <Workspace>
    <Rail>
      <Round aria-label="Show browser"><svg width="11" height="11"><path d="M0 1h11l-5.500 10z" fill="#7c7c7c" /></svg></Round>
      <Round aria-label="Show grooves"><svg width="13" height="11"><path d="M0 4q3-4 6-1t7-1M0 9q3-4 6-1t7-1" fill="none" stroke="#7c7c7c" strokeWidth="2" /></svg></Round>
    </Rail>
    <Arranger>
      <Ruler>
        <svg width="100%" height="24" aria-hidden>
          {range(39).map((i) => (
            <rect key={i} x={Math.round(8 + i * 37.875)} y={i % 4 === 1 ? 18 : 23} width="1" height={i % 4 === 1 ? 6 : 1} fill="#161616" />
          ))}
        </svg>
      </Ruler>
      <OverviewRow>
        <Overview />
        <OverviewSide><SetButton>Set</SetButton></OverviewSide>
      </OverviewRow>
      <Strip><GridLines /></Strip>
      <Gap><Marker /></Gap>
      <AudioTrack n={1} name="pink noise 2.0" h={307} gain={1} meter={{ tick: 31, peak: 68, dull: 73, live: 109 }} />
      <AudioTrack n={2} name="pink noise 1.8" h={375} gain={1.15} selected meter={{ tick: 38, peak: 87, dull: 94, live: 135 }} />
      <Track $sep={3}>
        <Lane><GridLines /></Lane>
        <MixCell />
        <MixCell />
      </Track>
      {["A", "B"].map((n) => (
        <Track key={n} $h={17} $sep={2}>
          <Lane><GridLines /></Lane>
          <MixCell>
            <MixStack>
              <MixRow>
                <Box $w={46} $tone="orange" $bold>{n}</Box>
                <Box $w={17}>S</Box>
                <Box $w={25} $tone="orange">Post</Box>
              </MixRow>
            </MixStack>
            <Meter h={17} tick={3} peak={0} dull={17} live={17} />
          </MixCell>
          <Delay />
        </Track>
      ))}
      <Track $h={17} $sep={0}>
        <Lane><GridLines /></Lane>
        <MixCell>
          <MixStack>
            <MixRow>
              <ValueBox $w={46} $fill={c.blue} $level={82} aria-label="Master volume" defaultValue="0" />
              <ValueBox $w={46} $fill={c.azure} $level={82} aria-label="Cue volume" defaultValue="0" />
            </MixRow>
          </MixStack>
          <Meter h={16} tick={3} peak={7} dull={7} live={9} />
        </MixCell>
        <Delay />
      </Track>
      <TimeRuler>
        <svg width="100%" height="17" fontSize="11" aria-label="Time">
          {range(45).map((i) => (
            <rect key={i} x={Math.round(1 + i * 33.1)} y="0" width="1" height={i % 5 === 3 ? 8 : 2} fill="#161616" />
          ))}
          {range(5).map((i) => (
            <text key={i} x={Math.round(103 + i * 165.5)} y="12">{`1:01:80${3 + i}`}</text>
          ))}
          <path d="M187 5l4-5v5zM197 5l-4-5v5z" fill="#c9f0ff" />
        </svg>
      </TimeRuler>
    </Arranger>
    <SideColumn>
      <SideTop>
        <Round aria-label="Arrangement view"><svg width="11" height="11"><path d="M0 0h11v2H0zM0 3h11v2H0zM0 6h11v2H0zM0 9h11v2H0z" fill={c.orange} /></svg></Round>
        <Round aria-label="Session view"><svg width="11" height="11"><path d="M0 0h2v11H0zM3 0h2v11H3zM6 0h2v11H6zM9 0h2v11H9z" fill="#7c7c7c" /></svg></Round>
      </SideTop>
      <SideFill>
        {["I·O", "R", "M", "D"].map((t) => <Toggle key={t}>{t}</Toggle>)}
      </SideFill>
    </SideColumn>
  </Workspace>
);

const SmallMeter = () => (
  <svg width="5" height="40" aria-hidden>
    {[0, 3].map((x) => (
      <g key={x}>
        <rect x={x} width="2" height="9" fill="#262626" />
        <rect x={x} y="9" width="2" height="1" fill="#a2ee72" />
        <rect x={x} y="10" width="2" height="4" fill="#658f43" />
        <rect x={x} y="14" width="2" height="26" fill="#2fea66" />
      </g>
    ))}
    <rect y="4" width="5" height="1" fill="#8a8a8a" />
  </svg>
);

const Utility = () => (
  <DeviceView>
    <MeterSlot><SmallMeter /></MeterSlot>
    <Device>
      <DeviceHead>
        <Dot $on aria-label="Device on" />
        <span>Utility</span>
        <svg width="10" height="12" viewBox="0 0 10 12" aria-hidden>
          <path d="M3 12L0 7q1-1 2 1V2h1v4l1-6h1v6l1-5h1v6l2-4h1l-2 9z" fill="#4536f0" />
        </svg>
        <Dot aria-label="Hot-swap"><svg width="9" height="9"><path d="M1 5l3-4v3h2M8 4L5 8V5H3" {...glyph} strokeWidth="1" /></svg></Dot>
        <Dot aria-label="Save preset"><svg width="7" height="7"><path d="M0 0h6l1 1v6H0z" /><path d="M2 1h3v2H2z" fill="#aaa" /></svg></Dot>
      </DeviceHead>
      <DeviceCols>
        <DeviceCol $divide>
          <Caption $bold>Input</Caption>
          <DevRow $top={2}>
            <Box $w={27} $tone="orange">Ø L</Box>
            <Box $w={27} $tone="orange">Ø R</Box>
          </DevRow>
          <StereoSelect>
            <select aria-label="Channel mode"><option>Stereo</option></select>
            <Tri dir="down" size={7} />
          </StereoSelect>
          <Caption $top={6}>Width</Caption>
          <Knob />
          <Caption $top={-4}>100 %</Caption>
          <DevRow $top={4}><Box $w={57}>Mono</Box></DevRow>
          <DevRow $top={9}><Box $w={57}>Bass Mono</Box></DevRow>
          <DevRow $top={3}>
            <ValueBox $w={41} $fill={c.field} $level={38} $rest="#969696" aria-label="Bass mono frequency" defaultValue="120 Hz" />
            <Dot aria-label="Audition"><svg width="9" height="9"><path d="M2 8V5q0-4 2.500-4T7 5v3" {...glyph} /></svg></Dot>
          </DevRow>
        </DeviceCol>
        <DeviceCol>
          <Caption $bold>Output</Caption>
          <Caption $top={7}>Gain</Caption>
          <Knob />
          <Caption $top={-4}>0.00 dB</Caption>
          <Caption $top={9}>Balance</Caption>
          <Knob />
          <Caption $top={-4}>C</Caption>
          <DevRow $top={9}>
            <Box $w={31}>Mute</Box>
            <Box $w={20}>DC</Box>
          </DevRow>
        </DeviceCol>
      </DeviceCols>
    </Device>
    <MeterSlot><SmallMeter /></MeterSlot>
    <Chain />
  </DeviceView>
);

const SpanWindow = () => (
  <Window $x={773} $y={71} $w={935} aria-label="SPAN Plus">
    <TitleBar>SPAN Plus/Master<Close aria-label="Close">x</Close></TitleBar>
    <SpanBar>
      <Cluster><SpanButton $w={22}>?</SpanButton></Cluster>
      <Cluster>
        <SpanButton $w={55}>Presets</SpanButton>
        <SpanButton $w={21} aria-label="Preset menu"><Tri dir="down" /></SpanButton>
      </Cluster>
      <Cluster>
        <SpanButton $w={24} aria-label="Undo"><svg width="16" height="16"><path d="M4 3a6.500 6.500 0 1 0 8 0" {...glyph} strokeWidth="2" /><path d="M1 2h6v5z" /></svg></SpanButton>
        <SpanButton $w={24} $tone="off" aria-label="Redo"><svg width="16" height="16"><path d="M4 3a6.500 6.500 0 1 0 8 0" fill="none" stroke="#3c3c3e" strokeWidth="2" /><path d="M15 2H9v5z" fill="#3c3c3e" /></svg></SpanButton>
      </Cluster>
      <Cluster $mr={2}><AB><ABHalf $on>A</ABHalf><ABHalf>B</ABHalf></AB></Cluster>
      <Cluster><SpanButton $w={36} aria-label="Copy A to B">A<Tri dir="right" size={7} />B</SpanButton></Cluster>
      <Cluster>
        <SpanButton $w={56}>Routing</SpanButton>
        <SpanButton $w={21} aria-label="Routing menu"><Tri dir="down" /></SpanButton>
      </Cluster>
      <Cluster $mr={10}>
        <SpanButton $w={53} $caps>STEREO</SpanButton>
        <SpanButton $w={38} $caps>SOLO</SpanButton>
        <SpanButton $w={55}>Copy to</SpanButton>
      </Cluster>
      <SpanButton $w={133} $caps>HIDE METERS AND STATS</SpanButton>
      <Brand>
        <svg width="23" height="23" aria-hidden>
          <rect width="23" height="23" rx="3" fill="#cf2127" />
          <path d="M4 2q1 8 6 10M9 1q2 9 5 10 2-3 1-10" fill="none" stroke="#fff" strokeWidth="2" />
          <path d="M18 2q4 6-1 9-5 2-7 9" fill="none" stroke="#fff" strokeWidth="1.500" />
          <ellipse cx="7" cy="20" rx="4" ry="2.500" fill="#fff" />
        </svg>
        SPAN Plus
      </Brand>
      <SpanButton $w={24} aria-label="Menu"><svg width="16" height="14"><path d="M0 1h16M0 7h16M0 13h16" {...glyph} strokeWidth="2" /></svg></SpanButton>
    </SpanBar>
    <SpanBody>
      <Panel>
        <PanelHead>
          <Tab $w={85}>Spectrum</Tab>
          <HeadItems>
            <SpanButton $w={38} $caps>HOLD</SpanButton>
            <SpanButton $w={34} aria-label="Hold colour"><Swatch $color="#ff9c2e" $core="#dd8220" /></SpanButton>
            <HeadText $ml={6} $mr={2}>Underlay</HeadText>
            <SpanButton $w={71}><Swatch $color="#ee8a66" $core="#d17f64" />2</SpanButton>
            <Push />
            <SpanButton $w={89}>Save as PNG</SpanButton>
            <Spacer $w={0} />
            <SpanButton $w={57}>Static<Tri dir="down" size={9} /></SpanButton>
            <Spacer $w={0} />
            <SpanButton $w={100}>Import/Export<Tri dir="down" size={9} /></SpanButton>
            <HeadText $ml={3}>Mode</HeadText>
            <SpanButton $w={67} $caps>DEFAULT</SpanButton>
            <SpanButton $w={24} aria-label="Settings">
              <svg width="18" height="18" viewBox="-9 -9 18 18">
                <circle r="5.500" {...glyph} strokeWidth="2" />
                <circle r="7.500" fill="none" stroke="#000" strokeWidth="2" strokeDasharray="2.500 3.390" />
              </svg>
            </SpanButton>
          </HeadItems>
        </PanelHead>
        <PlotGrid>
          <Spectrum />
          <Scroll $vertical>
            <Square aria-label="Scroll up"><Tri dir="up" size={12} /></Square>
            <ScrollTrack $vertical>
              <Thumb $vertical aria-label="Range top" />
              <Thumb $vertical aria-label="Range bottom" />
            </ScrollTrack>
            <Square aria-label="Scroll down"><Tri dir="down" size={12} /></Square>
          </Scroll>
          <Scroll>
            <Square aria-label="Scroll left"><Tri dir="left" size={12} /></Square>
            <ScrollTrack>
              <Thumb aria-label="Range start" />
              <Thumb aria-label="Range end" />
            </ScrollTrack>
            <Square aria-label="Scroll right"><Tri dir="right" size={12} /></Square>
          </Scroll>
          <Square aria-label="Reset range"><Tri dir="diamond" size={12} /></Square>
        </PlotGrid>
      </Panel>
      <LowerPanels>
        <Panel>
          <PanelHead>
            <Tab $w={78}>Statistics</Tab>
            <HeadItems>
              <HeadText $ml={6} $mr={6}>RMS</HeadText>
              <Num>-35.2</Num>
              <Num>-35.2</Num>
              <Push />
              <SpanButton $w={45}>Reset</SpanButton>
              <HeadText $ml={6} $mr={2}>Metering</HeadText>
              <SpanButton $w={50} $caps>DBFS</SpanButton>
              <Spacer $w={0} />
              <SpanButton $w={22} $caps $tone="on">TP</SpanButton>
            </HeadItems>
          </PanelHead>
          <StatGrid>
            <Stat>Max Crest Factor<div><Num>21.8</Num><Num>21.8</Num></div></Stat>
            <Stat>True Peak Clippings<div><Num>0</Num><Num>0</Num></div></Stat>
            <Stat>True Peak<div><Num>-6.4</Num><Num>-6.4</Num></div></Stat>
          </StatGrid>
        </Panel>
        <Panel>
          <PanelHead>
            <Tab $w={137}>Correlation Meter</Tab>
            <HeadItems>
              <Spacer $w={2} />
              <Num>L-R</Num>
              <Spacer $w={8} />
              <Num>0.0</Num>
            </HeadItems>
          </PanelHead>
          <Correlation />
        </Panel>
      </LowerPanels>
      <Panel $tall>
        <Tab $w={44}>Out</Tab>
        <OutMeter />
      </Panel>
    </SpanBody>
  </Window>
);

const ScopeWindow = () => (
  <Window $x={868} $y={796} $w={825} aria-label="Oscilloscope">
    <TitleBar>s(M)exoscope 64bit/Master<Close aria-label="Close">x</Close></TitleBar>
    <ScopeBody>
      <Fader type="range" aria-label="Offset" defaultValue={50} />
      <Screen width="645" height="283" aria-label="Waveform" role="img">
        <defs>
          <radialGradient id="glow" cx="385" cy="170" r="380" gradientUnits="userSpaceOnUse">
            <stop offset="0" stopColor="#fad2a4" />
            <stop offset="0.5" stopColor="#f8b878" />
            <stop offset="1" stopColor="#f4a159" />
          </radialGradient>
          <linearGradient id="rim">
            <stop offset="0.97" stopColor="#ee7428" stopOpacity="0" />
            <stop offset="1" stopColor="#ee7428" />
          </linearGradient>
          <linearGradient id="rimTop" x1="0" y1="0" x2="0" y2="1">
            <stop offset="0" stopColor="#ee7428" />
            <stop offset="0.03" stopColor="#f59a50" stopOpacity="0" />
            <stop offset="0.97" stopColor="#fff" stopOpacity="0" />
            <stop offset="1" stopColor="#fff" stopOpacity="0.6" />
          </linearGradient>
        </defs>
        {["url(#glow)", "url(#rim)", "url(#rimTop)"].map((f) => (
          <path key={f} d="M12 0H626q9 0 11 14 7 62 7 127t-7 127q-2 14-11 14H12Q2 282 1 266 0 200 0 141T1 14Q2 0 12 0z" fill={f} />
        ))}
        <path d={scopeShape} fill="#747474" />
        <g fill="#bb7135" fontFamily={pixelFont} fontWeight="700" textAnchor="end">
          <text x="581" y="257" fontSize="11">BRAM AND SEAN @</text>
          <text x="581" y="275" fontSize="18">SMARTELECTRONIX</text>
        </g>
        <Mascot />
      </Screen>
      <Controls>
        <Shapes width="140" height="285" aria-hidden>
          <g fill="#e4e4e4" stroke="#9c9c9c" strokeWidth="1">
            <path d="M11 1h93q22 0 26 22l7 67H7L1 14Q0 1 11 1z" />
            <path d="M7 97h130q2 45 0 89H7q-1-45 0-89z" />
            <path d="M7 193h130l-5 66q-4 24-28 24H11Q0 283 1 270z" />
          </g>
        </Shapes>
        <Section $h={90} $top={14} $left={2}>
          <Unit $w={65}>
            <TinyLabel $h={8} htmlFor="time">TIME</TinyLabel>
            <ScopeKnob angle={75} />
            <Readout id="time" defaultValue="0.005" />
          </Unit>
          <Unit $w={65}>
            <TinyLabel $h={8} htmlFor="amp">AMP</TinyLabel>
            <ScopeKnob angle={0} />
            <Readout id="amp" defaultValue="1.000" />
          </Unit>
        </Section>
        <FreeRow><FreeFrame><Tiny $w={59}>FREE</Tiny></FreeFrame></FreeRow>
        <Section $h={89} $top={12} $left={4}>
          <Unit $w={65}>
            <TinyLabel $h={16} htmlFor="speed">{"INTERNAL\nTRIG SPEED"}</TinyLabel>
            <ScopeKnob angle={0} />
            <Readout id="speed" defaultValue="7.842" />
          </Unit>
          <Unit $w={65}>
            <TinyLabel $h={16} htmlFor="thres">{"RETRIGGER\nTHRES"}</TinyLabel>
            <ScopeKnob angle={0} />
            <Readout id="thres" defaultValue="100.0" />
          </Unit>
        </Section>
        <Section $h={49} $top={12} $left={9}>
          <Unit $w={58}><TinyLabel $h={16} htmlFor="sync">{"SYNC\nREDRAW"}</TinyLabel><Tiny id="sync">OFF</Tiny></Unit>
          <Unit $w={58}><TinyLabel $h={16} htmlFor="freeze">FREEZE</TinyLabel><Tiny id="freeze">OFF</Tiny></Unit>
        </Section>
        <Section $h={40} $top={8} $left={4}>
          <Unit $w={58}><TinyLabel $h={8} htmlFor="dc">DC-KILL</TinyLabel><Tiny id="dc">OFF</Tiny></Unit>
          <Unit $w={58}><TinyLabel $h={8} htmlFor="chan">CHANNEL</TinyLabel><Tiny id="chan" $hot>LEFT</Tiny></Unit>
        </Section>
      </Controls>
    </ScopeBody>
  </Window>
);

const Status = () => (
  <StatusBar>
    <Round aria-label="Info view"><svg width="11" height="13"><path d="M1 1v11l10-5.500z" fill="#7c7c7c" /></svg></Round>
    <StatusField aria-label="Info" />
    <StatusField $w={206} aria-label="Messages" />
    <StatusTab>
      2-pink noise 1.8
      <svg width="12" height="16" aria-hidden>
        <path d="M0 0h12v16H0z" fill="#858585" /><path d="M1 2h5v2H1z" fill={c.orange} /><path d="M7 2h4v12H7zM1 6h4v8H1z" fill="#a5a5a5" />
      </svg>
    </StatusTab>
    <Round aria-label="Detail view"><svg width="11" height="11"><path d="M5.500 0L11 11H0z" fill="#7c7c7c" /></svg></Round>
  </StatusBar>
);

export default function App() {
  return (
    <>
      <Global />
      <Page>
        <TopControls />
        <Arrangement />
        <Utility />
        <Status />
        <Corner width="9" height="9" aria-hidden>
          <path d="M0 0h9v9H0z" fill={c.orange} /><path d="M2 2h5v1H4l3 4H6L3 4v3H2z" fill="#333" />
        </Corner>
        <SpanWindow />
        <ScopeWindow />
      </Page>
    </>
  );
}
